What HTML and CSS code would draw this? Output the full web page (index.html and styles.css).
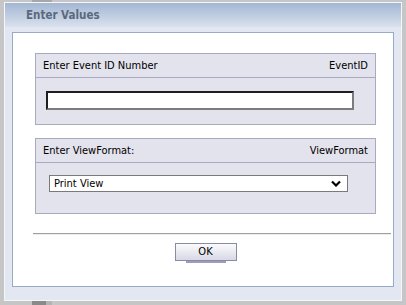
FILE: index.html
```html
<!DOCTYPE html>
<html>
<head>
<meta charset="utf-8">
<link rel="stylesheet" href="styles.css">
</head>
<body>
<div class="mark mark-top"></div>
<div class="mark mark-bottom"></div>
<div class="dialog">
  <div class="titlebar">Enter Values</div>
  <div class="body">
    <div class="panel">
      <div class="section sec1">
        <div class="sec-head"><span>Enter Event ID Number</span><span>EventID</span></div>
        <div class="sec-body"><div class="input"></div></div>
      </div>
      <div class="section sec2">
        <div class="sec-head"><span>Enter ViewFormat:</span><span>ViewFormat</span></div>
        <div class="sec-body">
          <div class="select"><span>Print View</span>
            <svg class="chev" width="10" height="7" viewBox="0 0 10 7"><path d="M1 1.5 L5 5.5 L9 1.5" fill="none" stroke="#000" stroke-width="2.2"/></svg>
          </div>
        </div>
      </div>
      <div class="rule"></div>
      <div class="btn-row"><div class="btn">OK</div></div>
    </div>
  </div>
</div>
</body>
</html>
```
FILE: styles.css
```css
html, body { margin: 0; padding: 0; }
body {
  width: 406px; height: 305px; overflow: hidden;
  background: #c6c6c6;
  font-family: "DejaVu Sans Condensed", "DejaVu Sans", sans-serif;
  font-size: 11px; color: #000;
  position: relative;
}
.mark { position: absolute; left: 32px; width: 20px; height: 2px; background: #a8a8a8; }
.mark-top { top: 0; }
.mark-bottom { bottom: 0; height: 4px; background: linear-gradient(to right, #8a8a8a 0 14px, #b4b4b4 14px); }
.dialog {
  margin: 2px 4px 4px 4px;
  width: 396px; height: 297px;
  border: 1px solid #f4f6fa;
  background: #e3e7f1;
  display: flex; flex-direction: column;
}
.titlebar {
  height: 24px; flex: none;
  background: linear-gradient(to bottom, #a3b7d3, #d9e1ee);
  color: #5a697e; font-weight: bold; font-size: 11.5px;
  padding-left: 21px; line-height: 25px;
}
.body { flex: 1; padding: 5px 7px 13px 7px; display: flex; }
.panel {
  flex: 1; background: #fff;
  border: 1px solid #98a9c9;
  padding: 20px 17px 0 22px;
}
.section { border: 1px solid #a9a9c1; background: #e3e3ed; }
.sec2 { margin-top: 13px; }
.sec-head {
  height: 23px; display: flex; justify-content: space-between; align-items: center;
  padding: 0 7px 0 7px; border-bottom: 1px solid #a9a9c1;
}
.sec1 .sec-body { height: 46px; padding: 13px 21px 0 10px; box-sizing: border-box; }
.sec2 .sec-body { height: 50px; padding: 12px 27px 0 13px; box-sizing: border-box; }
.input {
  height: 15px; background: #fff;
  border-style: solid; border-width: 2px;
  border-color: #1e1e1e #7c7c7c #7c7c7c #1e1e1e;
}
.select {
  height: 15px; background: #fff; border: 1px solid #7a7a7a;
  display: flex; align-items: center; justify-content: space-between;
  padding: 0 6px 0 4px;
}
.chev { display: block; }
.rule {
  margin: 19px -15px 0 -2px; height: 1px; background: #a0a0a0;
  border-bottom: 1px solid #ededed;
}
.btn-row { display: flex; justify-content: center; margin-top: 8px; }
.btn {
  width: 60px; height: 16px; line-height: 16px; text-align: center;
  border: 1px solid #8a8aa6;
  background: linear-gradient(to bottom, #fbfbfd, #d8d8e6);
  color: #000; position: relative;
}
.btn::after {
  content: ""; position: absolute; left: 10px; right: 10px; bottom: -3px; height: 2px; background: #9d9db8;
}
```
